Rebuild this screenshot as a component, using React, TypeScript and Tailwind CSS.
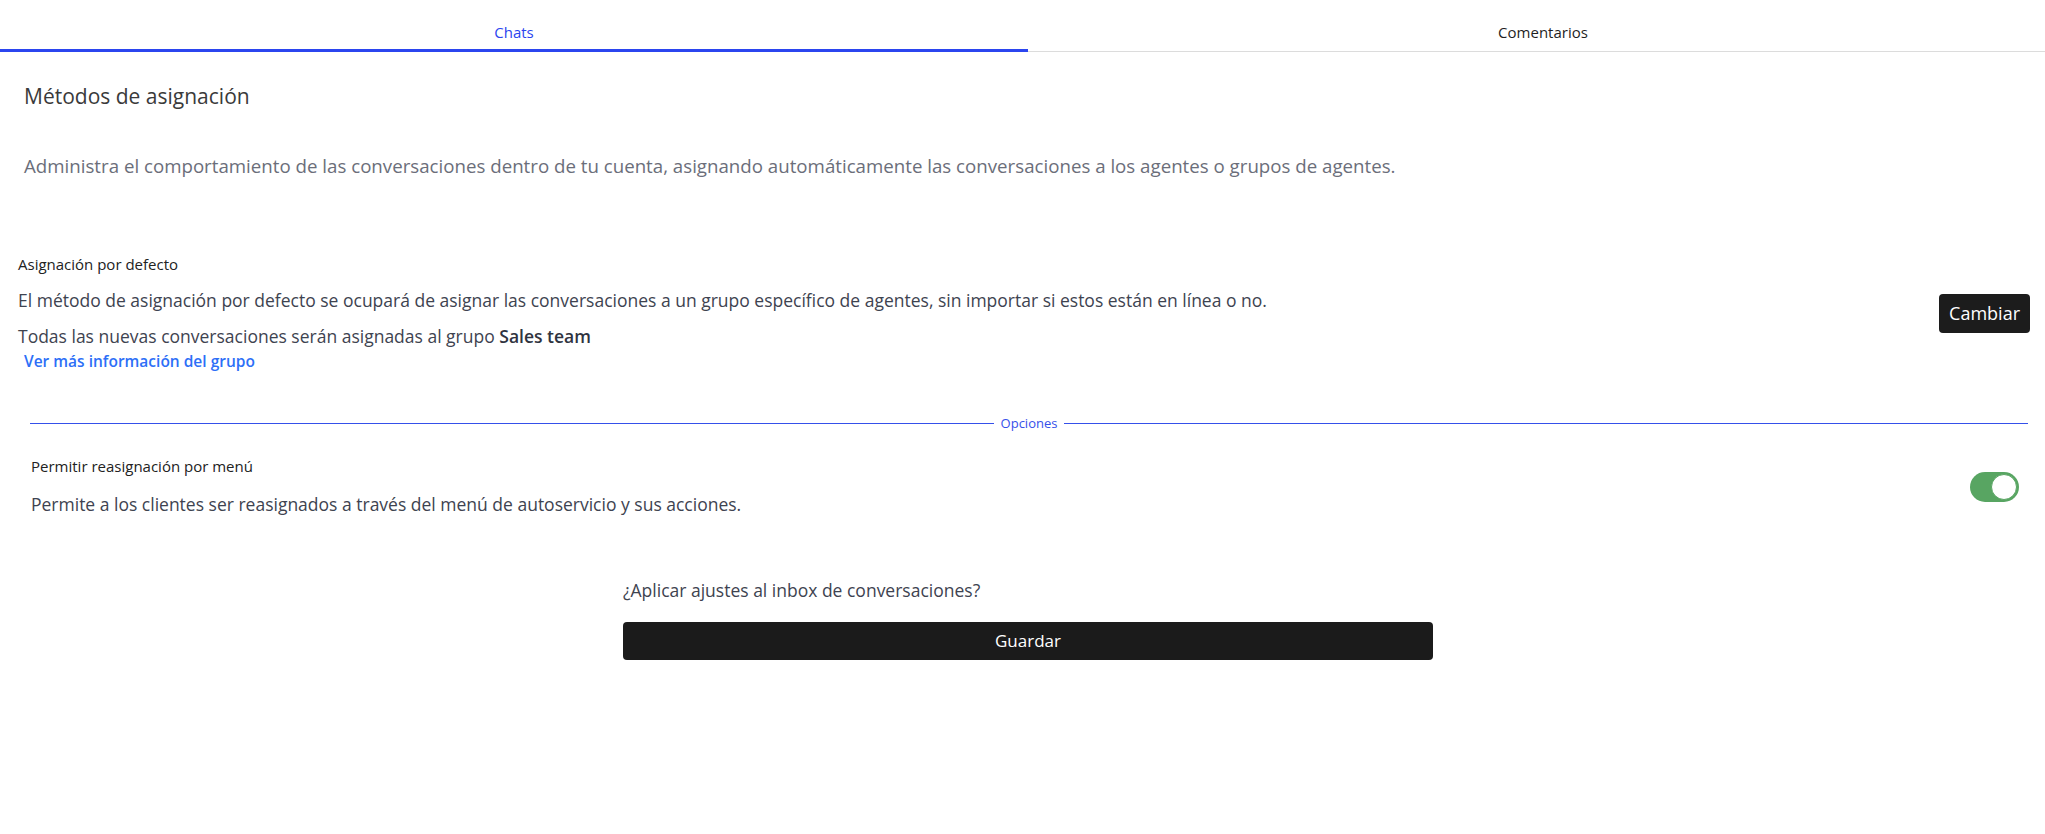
export default function App() {
  return (
    <div className="min-h-screen w-full bg-white font-['Open_Sans',sans-serif]">
      <div className="flex h-[52px]">
        <div className="flex w-[1028px] justify-center border-b-[3px] border-[#2b45ef] pt-[22px] text-[15px] leading-5 text-[#2b45ef]">
          Chats
        </div>
        <div className="flex flex-1 justify-center border-b border-[#dcdcdc] pt-[22px] pl-[13px] text-[15px] leading-5 text-[#1f1f1f]">
          Comentarios
        </div>
      </div>

      <div className="flex flex-col">
        <h1 className="mt-[30px] ml-[24px] text-[21px] leading-[28px] text-[#3a3a3a]">
          Métodos de asignación
        </h1>

        <p className="mt-[42px] ml-[24px] text-[18.7px] leading-[28px] text-[#6b6e7a]">
          Administra el comportamiento de las conversaciones dentro de tu cuenta, asignando automáticamente las conversaciones a los agentes o grupos de agentes.
        </p>

        <div className="mt-[74px] flex items-center justify-between pl-[18px] pr-[15px]">
          <div className="flex flex-col">
            <p className="text-[15px] leading-5 text-[#222]">Asignación por defecto</p>
            <p className="mt-[12px] text-[17.5px] leading-[28px] text-[#3e4350]">
              El método de asignación por defecto se ocupará de asignar las conversaciones a un grupo específico de agentes, sin importar si estos están en línea o no.
            </p>
            <p className="mt-[8px] text-[17.5px] leading-[28px] text-[#3e4350]">
              Todas las nuevas conversaciones serán asignadas al grupo{' '}
              <span className="font-semibold text-[#2f3340]">Sales team</span>
            </p>
            <a className="ml-[6px] text-[15.5px] font-semibold leading-[22px] text-[#2d6ff7]">
              Ver más información del grupo
            </a>
          </div>
          <button className="h-[39px] rounded-[4px] bg-[#1c1c1c] px-[10px] text-[18px] text-white">
            Cambiar
          </button>
        </div>

        <div className="mt-[43px] ml-[30px] mr-[17px] flex items-center">
          <div className="h-px flex-1 bg-[#3550ea]" />
          <span className="px-[7px] text-[13px] leading-4 text-[#3550ea]">Opciones</span>
          <div className="h-px flex-1 bg-[#3550ea]" />
        </div>

        <div className="mt-[25px] flex items-center justify-between pl-[31px] pr-[26px]">
          <div className="flex flex-col">
            <p className="text-[15px] leading-5 text-[#222]">Permitir reasignación por menú</p>
            <p className="mt-[14px] text-[17.5px] leading-[28px] text-[#3e4350]">
              Permite a los clientes ser reasignados a través del menú de autoservicio y sus acciones.
            </p>
          </div>
          <div className="flex h-[30px] w-[49px] items-center justify-end rounded-full bg-[#58a562] p-[2px]">
            <div className="h-[26px] w-[26px] rounded-full border border-[#58a562] bg-white" />
          </div>
        </div>

        <div className="mx-auto mt-[60px] flex w-[821px] flex-col pl-[11px]">
          <p className="text-[17.5px] leading-6 text-[#3e4350]">¿Aplicar ajustes al inbox de conversaciones?</p>
          <button className="mt-[20px] h-[38px] w-full rounded-[4px] bg-[#1b1b1b] text-[17px] text-white">
            Guardar
          </button>
        </div>
      </div>
    </div>
  )
}
